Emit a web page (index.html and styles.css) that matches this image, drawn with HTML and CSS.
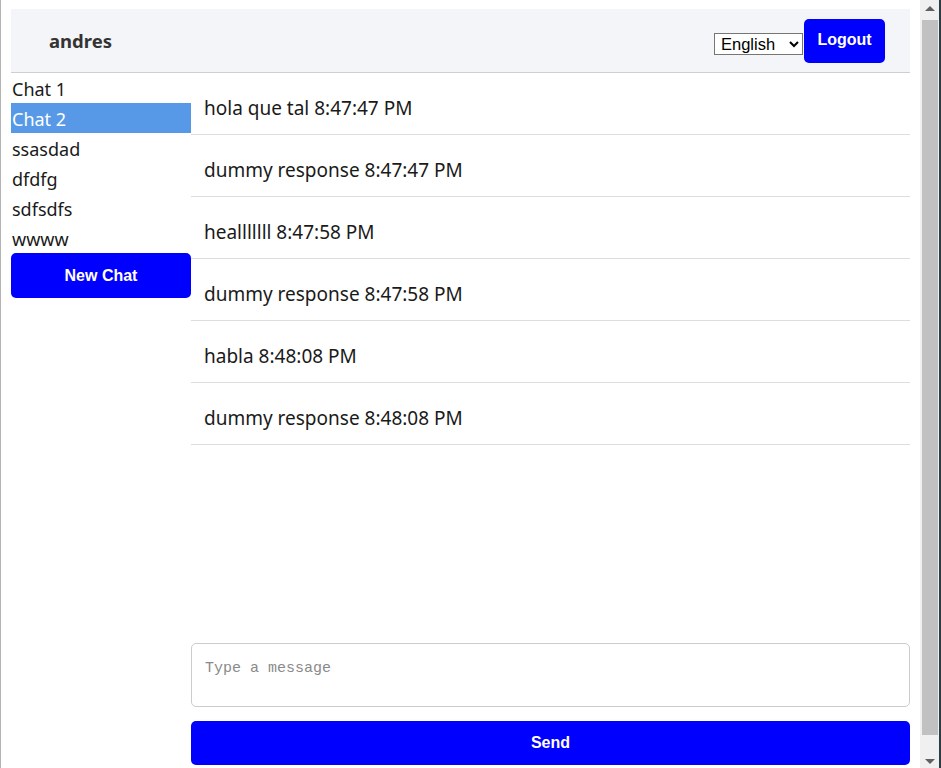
FILE: index.html
```html
<!DOCTYPE html>
<html lang="en">
<head>
<meta charset="utf-8">
<title>Chat</title>
<link rel="stylesheet" href="styles.css">
</head>
<body>
<div class="window">
  <div class="page">
    <header class="topbar">
      <span class="user">andres</span>
      <div class="actions">
        <select class="lang">
          <option>English</option>
          <option>Español</option>
        </select>
        <button class="btn logout">Logout</button>
      </div>
    </header>
    <div class="main">
      <aside class="sidebar">
        <ul class="chat-list">
          <li class="chat-item">Chat 1</li>
          <li class="chat-item active">Chat 2</li>
          <li class="chat-item">ssasdad</li>
          <li class="chat-item">dfdfg</li>
          <li class="chat-item">sdfsdfs</li>
          <li class="chat-item">wwww</li>
        </ul>
        <button class="btn new-chat">New Chat</button>
      </aside>
      <section class="chat">
        <div class="messages">
          <div class="message">hola que tal 8:47:47 PM</div>
          <div class="message">dummy response 8:47:47 PM</div>
          <div class="message">healllllll 8:47:58 PM</div>
          <div class="message">dummy response 8:47:58 PM</div>
          <div class="message">habla 8:48:08 PM</div>
          <div class="message">dummy response 8:48:08 PM</div>
        </div>
        <textarea class="input" placeholder="Type a message"></textarea>
        <button class="btn send">Send</button>
      </section>
    </div>
  </div>
  <div class="scrollbar" aria-hidden="true">
    <div class="sb-btn"><span class="arrow up"></span></div>
    <div class="sb-track"><div class="sb-thumb"></div></div>
    <div class="sb-btn"><span class="arrow down"></span></div>
  </div>
</div>
</body>
</html>
```

FILE: styles.css
```css
html, body {
  margin: 0;
  height: 100%;
  overflow: hidden;
}
body {
  font-family: "Noto Sans", "Open Sans", sans-serif;
  color: #1a1a1a;
  background: #ffffff;
}
.window {
  display: flex;
  height: 768px;
}
.page {
  flex: 1;
  min-width: 0;
  border-left: 1px solid #b4b4b4;
  padding: 9px 10px 0 10px;
}
.scrollbar {
  width: 19px;
  flex: none;
  background: #f0f0f0;
  border-right: 2px solid #2c3e44;
  display: flex;
  flex-direction: column;
}
.sb-btn {
  height: 19px;
  display: flex;
  align-items: center;
  justify-content: center;
  flex: none;
}
.arrow {
  width: 0;
  height: 0;
  border-left: 5px solid transparent;
  border-right: 5px solid transparent;
}
.arrow.up {
  border-bottom: 5px solid #606060;
  margin-top: -2px;
}
.arrow.down {
  border-top: 5px solid #606060;
  margin-top: 6px;
}
.sb-track {
  flex: 1;
  padding: 1px 1px 14px 2px;
}
.sb-thumb {
  height: 100%;
  background: #c1c1c1;
}
.topbar {
  display: flex;
  justify-content: space-between;
  align-items: center;
  height: 63px;
  background: #f3f5f8;
  border-bottom: 1px solid #cfcfcf;
  padding: 0 25px 0 38px;
}
.user {
  font-weight: 700;
  font-size: 18.5px;
  color: #333333;
}
.actions {
  display: flex;
  align-items: center;
}
.lang {
  font-family: "Liberation Sans", Arial, sans-serif;
  font-size: 16.5px;
  height: 22px;
  width: 89px;
  margin-top: 6px;
  margin-right: 1px;
  padding: 0 0 0 2px;
  border: 1px solid #767676;
  border-radius: 0;
  background: #ffffff;
  color: #000;
}
.btn {
  border: none;
  background: #0000ff;
  color: #ffffff;
  font-family: "Liberation Sans", Arial, sans-serif;
  font-weight: 700;
  font-size: 16px;
  border-radius: 5px;
  cursor: pointer;
}
.logout {
  width: 81px;
  height: 44px;
  padding: 0 0 1px 0;
}
.main {
  display: flex;
  height: 692px;
}
.sidebar {
  width: 180px;
  flex: none;
  display: flex;
  flex-direction: column;
}
.chat-list {
  list-style: none;
  margin: 0;
  padding: 0;
}
.chat-item {
  height: 30px;
  line-height: 32px;
  font-size: 18px;
  padding-left: 1px;
  color: #1a1a1a;
}
.chat-item.active {
  background: #5799e6;
  color: #ffffff;
}
.new-chat {
  height: 45px;
  width: 180px;
}
.chat {
  flex: 1;
  display: flex;
  flex-direction: column;
  min-width: 0;
}
.messages {
  flex: 1;
}
.message {
  line-height: 24px;
  padding: 23px 13px 0 13px;
  box-sizing: border-box;
  height: 62px;
  border-bottom: 1px solid #dddddd;
  font-size: 19px;
  color: #1a1a1a;
}
.input {
  height: 64px;
  box-sizing: border-box;
  border: 1px solid #cccccc;
  border-radius: 5px;
  padding: 16px 13px 12px 13px;
  font-family: "Liberation Mono", monospace;
  font-size: 15px;
  resize: none;
  margin: 0 0 14px 0;
}
.input::placeholder {
  color: #8a8a8a;
}
.send {
  height: 44px;
  width: 100%;
}
```
